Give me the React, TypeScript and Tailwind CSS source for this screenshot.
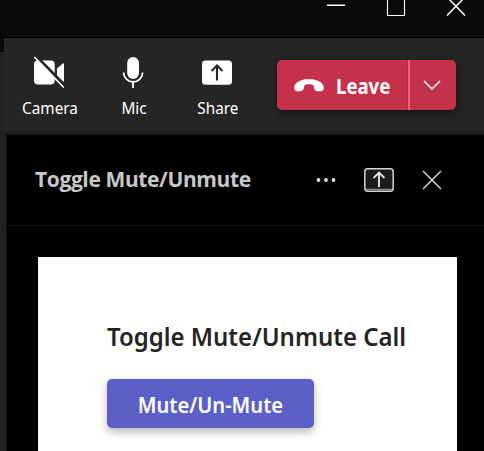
import React from "react";

function ToolButton({ label, children }: { label: string; children: React.ReactNode }) {
  return (
    <button className="flex h-full w-[57px] flex-col items-center">
      <span className="mt-[17px] flex h-9 items-center justify-center">{children}</span>
      <span className="mt-[6px] scale-x-[0.9] text-[17px] leading-[22px] whitespace-nowrap text-white">{label}</span>
    </button>
  );
}

function WindowBar() {
  return (
    <header className="flex h-[38px] shrink-0 border-b border-black bg-[#0a0a0a] pl-[326px]">
      <svg width="150" height="20" viewBox="326 0 150 20" fill="none" stroke="#fff">
        <path d="M327 5.25h18" strokeWidth="1.5" />
        <path d="M387.5-2v17.5h17V-2" strokeWidth="1.1" />
        <path d="M447.5-2.500l17.500 18M464.500-2.500l-17.500 18" strokeWidth="1.5" />
      </svg>
    </header>
  );
}

function CallBar() {
  return (
    <nav className="flex h-[94px] shrink-0 bg-[#252525]">
      <div className="flex gap-[27px] pl-[17px]">
        <ToolButton label="Camera">
          <svg width="35" height="34" viewBox="32 56 35 34">
            <rect x="34" y="60.500" width="20.700" height="24" rx="4" fill="#fff" />
            <path d="M57 68.500l5.800-5q1.200-.8 1.200.8v16.500q0 1.500-1.200.6l-5.800-4.600z" fill="#fff" />
            <path d="M36.300 56.400l29.500 30" stroke="#252525" strokeWidth="3" />
            <path d="M34.800 57.500l28.500 29.500" stroke="#fff" strokeWidth="1.700" strokeLinecap="round" />
          </svg>
        </ToolButton>
        <ToolButton label="Mic">
          <svg width="25" height="34" viewBox="121 56 25 34">
            <rect x="127.200" y="57" width="11.800" height="22" rx="5.900" fill="#fff" />
            <path d="M123.600 72.500a9.500 9.500 0 0 0 19 0M133 82v6" stroke="#fff" strokeWidth="1.800" fill="none" />
          </svg>
        </ToolButton>
        <ToolButton label="Share">
          <svg width="35" height="34" viewBox="200 56 35 34" fill="none">
            <rect x="202" y="60.500" width="30" height="24.200" rx="3.500" fill="#fff" />
            <path d="M217 80.500V65.500M211.500 71l5.500-5.500 5.500 5.500" stroke="#252525" strokeWidth="2.100" />
          </svg>
        </ToolButton>
      </div>
      <div className="mt-[22px] ml-[31px] flex h-[50px] w-[179px] rounded-[5px] bg-[#c4314b] shadow-[0_3px_7px_rgba(0,0,0,0.45)]">
        <button className="flex w-[131px] items-center rounded-l-[5px] border-r border-[#b52b43] pl-[17px]">
          <svg width="30" height="16" viewBox="0 0 30 16" fill="#fff">
            <path d="M15 2C8 2 1.500 5 .4 9.200c-.5 2.600.5 5 2.600 5h3c2.400 0 3.600-1 4-3.600.2-2 .5-2.600 1.500-2.900 2-.5 5-.5 7 0 1 .3 1.300.9 1.500 2.900.4 2.600 1.600 3.600 4 3.600h3c2.100 0 3.100-2.400 2.600-5C28.500 5 22 2 15 2z" />
          </svg>
          <span className="ml-[12px] origin-left scale-x-[0.885] pt-[4px] text-[21px] font-bold text-white">Leave</span>
        </button>
        <button className="flex flex-1 items-center justify-center border-l-2 border-[#ff5f74] pr-[2px]">
          <svg width="18" height="12" viewBox="0 0 18 12" fill="none">
            <path d="M1 2l8 8 8-8" stroke="#fff" strokeWidth="1.500" />
          </svg>
        </button>
      </div>
    </nav>
  );
}

function PanelHeader() {
  return (
    <div className="flex h-[91px] shrink-0 items-center border-b border-[#161616] pl-[28px] text-[#c8c8c8]">
      <h2 className="w-[280px] shrink-0 font-['Open_Sans',sans-serif] text-[21px] font-bold tracking-[-0.38px] whitespace-nowrap">Toggle Mute/Unmute</h2>
      <svg width="22" height="8" viewBox="0 0 22 8" fill="#e0e0e0">
        <circle cx="3.500" cy="4" r="1.900" />
        <circle cx="11" cy="4" r="1.900" />
        <circle cx="18.500" cy="4" r="1.900" />
      </svg>
      <svg className="ml-[27px] shrink-0" width="30" height="24" viewBox="0 0 30 24" fill="none">
        <rect x=".8" y=".8" width="28.400" height="22.400" rx="3" fill="#1b1b1b" stroke="#d4d4d4" strokeWidth="1.500" />
        <path d="M2 21.500h26" stroke="#858585" strokeWidth="1.600" />
        <path d="M15 19V5M9.500 10L15 4.500l5.500 5.500" stroke="#e4e4e4" strokeWidth="1.900" />
      </svg>
      <svg className="ml-[28px] shrink-0" width="20" height="20" viewBox="0 0 20 20">
        <path d="M1 1l18 18M19 1L1 19" stroke="#d8d8d8" strokeWidth="1.500" />
      </svg>
    </div>
  );
}

export default function App() {
  return (
    <div className="flex h-[451px] w-[484px] flex-col overflow-hidden bg-[#202020] font-['Noto_Sans','Open_Sans',sans-serif]">
      <WindowBar />
      <div className="flex min-h-0 flex-1">
        <div className="w-[4px] shrink-0 bg-[#212121]">
          <div className="h-[14px] border-b border-black bg-[#0a0a0a]" />
        </div>
        <div className="flex min-w-0 flex-1 flex-col">
          <CallBar />
          <div className="h-[3px] shrink-0 bg-[#1d1d1d]" />
          <main className="ml-[2px] flex min-h-0 flex-1 flex-col border-l border-[#101010] bg-black">
            <PanelHeader />
            <section className="mt-[31px] ml-[31px] flex w-[419px] flex-1 flex-col bg-white pl-[69px]">
              <h1 className="mt-[61px] w-[320px] origin-left scale-x-[0.922] text-[26px] leading-[36px] font-semibold whitespace-nowrap text-[#252423]">Toggle Mute/Unmute Call</h1>
              <button className="mt-[25px] flex h-[49px] w-[207px] items-center justify-center rounded-[5px] bg-[#5b5fc7] pt-[2px] text-[22px] font-semibold whitespace-nowrap text-white shadow-[0_4px_8px_rgba(0,0,0,0.28)]">
                <span className="scale-x-[0.915]">Mute/Un-Mute</span>
              </button>
            </section>
          </main>
        </div>
      </div>
    </div>
  );
}
